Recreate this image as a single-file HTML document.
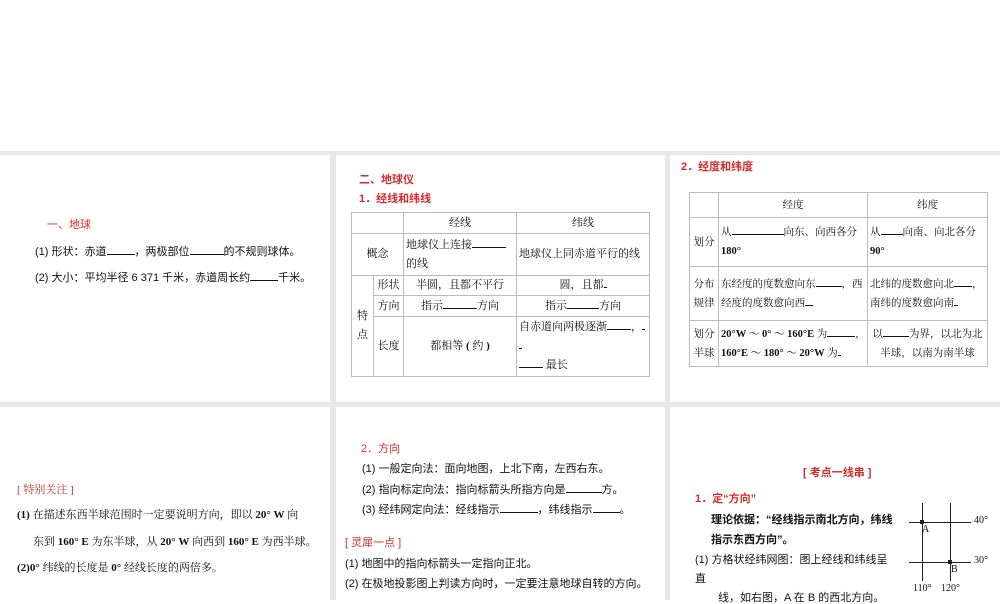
<!DOCTYPE html>
<html><head><meta charset="utf-8"><style>
*{margin:0;padding:0;box-sizing:border-box}
body{width:1000px;height:600px;position:relative;background:#fff;overflow:hidden;font-family:"Liberation Serif","Noto Serif CJK SC",serif;font-size:11px;color:#111}
.g{position:absolute;background:#e8e8e8}
.t{position:absolute;white-space:nowrap;line-height:1}
.r{color:#d52b2b;font-family:"Liberation Sans","Noto Sans CJK SC",sans-serif;font-weight:bold}
.s{font-family:"Liberation Sans","Noto Sans CJK SC",sans-serif}
.u{display:inline-block;border-bottom:1px solid #111;height:9px}
table{position:absolute;border-collapse:collapse;font-size:11px;table-layout:fixed}
td{border:1px solid #bbb;padding:0 2px;line-height:19px;vertical-align:middle;white-space:nowrap;overflow:hidden}
.c{text-align:center}
.ln{position:absolute;background:#222}
</style></head><body>
<div class="g" style="left:0;top:151px;width:1000px;height:4px"></div>
<div class="g" style="left:0;top:402px;width:1000px;height:5px"></div>
<div class="g" style="left:330px;top:151px;width:6px;height:449px"></div>
<div class="g" style="left:665px;top:151px;width:5px;height:449px"></div>

<!-- panel 1 -->
<div class="t r" style="left:47px;top:220px;font-weight:normal">一、地球</div>
<div class="t s" style="left:35px;top:246px">(1) 形状：赤道<span class="u" style="width:28px"></span>，两极部位<span class="u" style="width:34px"></span>的不规则球体。</div>
<div class="t s" style="left:35px;top:272px">(2) 大小：平均半径 6  371 千米，赤道周长约<span class="u" style="width:28px"></span>千米。</div>

<!-- panel 2 -->
<div class="t r" style="left:359px;top:175px">二、地球仪</div>
<div class="t r" style="left:359px;top:194px">1．经线和纬线</div>
<table style="left:351px;top:212px;width:298px">
<colgroup><col style="width:22px"><col style="width:30px"><col style="width:113px"><col style="width:133px"></colgroup>
<tr style="height:21px"><td colspan="2"></td><td class="c">经线</td><td class="c">纬线</td></tr>
<tr style="height:42px"><td colspan="2" class="c">概念</td><td>地球仪上连接<span class="u" style="width:34px"></span><br>的线</td><td>地球仪上同赤道平行的线</td></tr>
<tr style="height:20px"><td rowspan="3" class="c">特<br>点</td><td class="c">形状</td><td class="c">半圆，且都不平行</td><td class="c">圆，且都<span class="u" style="width:3px"></span></td></tr>
<tr style="height:21px"><td class="c">方向</td><td class="c">指示<span class="u" style="width:34px"></span>方向</td><td class="c">指示<span class="u" style="width:32px"></span>方向</td></tr>
<tr style="height:60px"><td class="c">长度</td><td class="c">都相等 <b>(</b> 约 <b>)</b></td><td>自赤道向两极逐渐<span class="u" style="width:24px"></span>，<span class="u" style="width:3px"></span><br><span class="u" style="width:3px"></span><br><span class="u" style="width:24px"></span> 最长</td></tr>
</table>

<!-- panel 3 -->
<div class="t r" style="left:681px;top:162px">2．经度和纬度</div>
<table style="left:689px;top:192px;width:298px;font-size:10.5px">
<colgroup><col style="width:29px"><col style="width:149px"><col style="width:120px"></colgroup>
<tr style="height:25px"><td></td><td class="c">经度</td><td class="c">纬度</td></tr>
<tr style="height:49px"><td class="c">划分</td><td>从<span class="u" style="width:52px"></span>向东、向西各分<br><b>180°</b></td><td>从<span class="u" style="width:22px"></span>向南、向北各分<br><b>90°</b></td></tr>
<tr style="height:54px"><td class="c">分布<br>规律</td><td>东经度的度数愈向东<span class="u" style="width:26px"></span>，西<br>经度的度数愈向西<span class="u" style="width:8px"></span></td><td>北纬的度数愈向北<span class="u" style="width:18px"></span>，<br>南纬的度数愈向南<span class="u" style="width:4px"></span></td></tr>
<tr style="height:46px"><td class="c">划分<br>半球</td><td><b>20°W</b> ～ <b>0°</b> ～ <b>160°E</b> 为<span class="u" style="width:28px"></span>，<br><b>160°E</b> ～ <b>180°</b> ～ <b>20°W</b> 为<span class="u" style="width:3px"></span></td><td class="c">以<span class="u" style="width:26px"></span>为界，以北为北<br>半球，以南为南半球</td></tr>
</table>

<!-- panel 4 -->
<div class="t" style="left:17px;top:485px;color:#c0392b">[ 特别关注 ]</div>
<div class="t" style="left:17px;top:510px"><b>(1)</b> 在描述东西半球范围时一定要说明方向，即以 <b>20° W</b> 向</div>
<div class="t" style="left:33px;top:537px">东到 <b>160° E</b> 为东半球，从 <b>20° W</b> 向西到 <b>160° E</b> 为西半球。</div>
<div class="t" style="left:17px;top:563px"><b>(2)0°</b> 纬线的长度是 <b>0°</b> 经线长度的两倍多。</div>

<!-- panel 5 -->
<div class="t r" style="left:361px;top:444px;font-weight:normal">2．方向</div>
<div class="t s" style="left:362px;top:464px">(1) 一般定向法：面向地图，上北下南，左西右东。</div>
<div class="t s" style="left:362px;top:484px">(2) 指向标定向法：指向标箭头所指方向是<span class="u" style="width:36px"></span>方。</div>
<div class="t s" style="left:362px;top:504px">(3) 经纬网定向法：经线指示<span class="u" style="width:38px"></span>，纬线指示<span class="u" style="width:27px"></span>。</div>
<div class="t r" style="left:345px;top:538px;font-weight:normal">[ 灵犀一点 ]</div>
<div class="t s" style="left:345px;top:559px">(1) 地图中的指向标箭头一定指向正北。</div>
<div class="t s" style="left:345px;top:579px">(2) 在极地投影图上判读方向时，一定要注意地球自转的方向。</div>

<!-- panel 6 -->
<div class="t r" style="left:803px;top:468px">[ 考点一线串 ]</div>
<div class="t r" style="left:695px;top:494px">1．定“方向”</div>
<div class="t s" style="left:711px;top:515px;font-weight:bold">理论依据：“经线指示南北方向，纬线</div>
<div class="t s" style="left:711px;top:535px;font-weight:bold">指示东西方向”。</div>
<div class="t s" style="left:695px;top:555px">(1) 方格状经纬网图：图上经线和纬线呈</div>
<div class="t s" style="left:695px;top:574px">直</div>
<div class="t s" style="left:718px;top:593px">线，如右图，A 在 B 的西北方向。</div>
<div class="ln" style="left:922px;top:503px;width:1px;height:78px"></div>
<div class="ln" style="left:950px;top:503px;width:1px;height:78px"></div>
<div class="ln" style="left:909px;top:522px;width:62px;height:1px"></div>
<div class="ln" style="left:909px;top:562px;width:62px;height:1px"></div>
<div class="ln" style="left:920px;top:520px;width:4px;height:4px"></div>
<div class="ln" style="left:948px;top:560px;width:4px;height:4px"></div>
<div class="t" style="left:974px;top:516px;font-size:10px">40°</div>
<div class="t" style="left:974px;top:556px;font-size:10px">30°</div>
<div class="t" style="left:922px;top:525px;font-size:10px">A</div>
<div class="t" style="left:951px;top:565px;font-size:10px">B</div>
<div class="t" style="left:913px;top:584px;font-size:10px">110°</div>
<div class="t" style="left:941px;top:584px;font-size:10px">120°</div>
</body></html>
